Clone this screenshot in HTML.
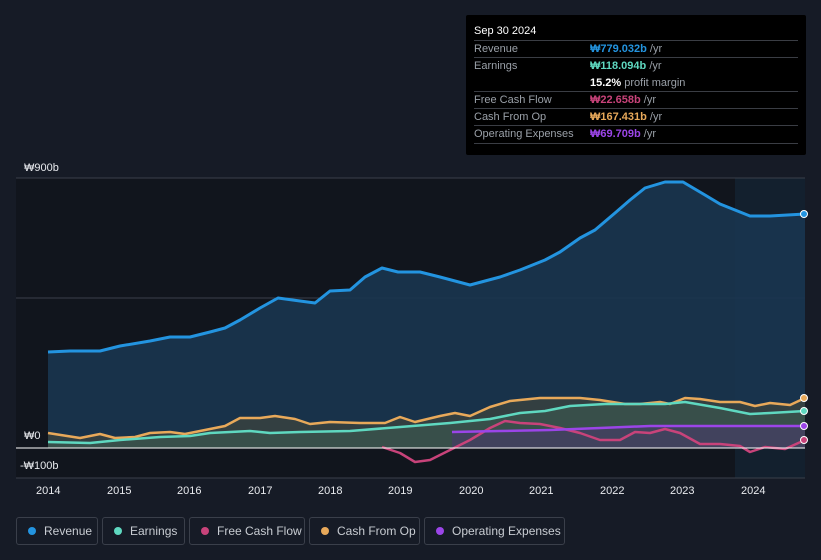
<!DOCTYPE html>
<html><head><meta charset="utf-8"><style>
body{margin:0;background:#161b26;font-family:"Liberation Sans","Noto Sans CJK KR",sans-serif;}
#w{position:relative;width:821px;height:560px;overflow:hidden;}
.tt{position:absolute;left:466px;top:15px;width:340px;height:140px;background:#000;border-radius:2px;}
.tt .d{position:absolute;left:8px;top:10px;color:#fff;font-size:11px;}
.row{position:absolute;left:8px;width:324px;border-top:1px solid #3a3d44;height:17px;font-size:11px;color:#9aa0a8;}
.row span{position:absolute;top:2px;}
.row b{font-weight:bold;}
.leg{position:absolute;top:517px;height:28px;border:1px solid #3a3f4a;border-radius:3px;color:#c8ccd2;font-size:12px;box-sizing:border-box;}
.leg i{position:absolute;left:11px;top:9px;width:8px;height:8px;border-radius:50%;}
.leg span{position:absolute;left:27px;top:6px;}
.ax{position:absolute;color:#e8eaee;font-size:11px;}
</style></head><body><div id="w">
<svg width="821" height="560" style="position:absolute;left:0;top:0">
<rect x="16" y="178" width="719" height="300" fill="#11151d"/>
<rect x="735" y="178" width="70" height="300" fill="#13202e"/>
<line x1="16" y1="178" x2="805" y2="178" stroke="#3a3f4a"/>
<line x1="16" y1="298" x2="805" y2="298" stroke="#3a3f4a"/>
<line x1="16" y1="478" x2="805" y2="478" stroke="#3a3f4a"/>
<path d="M48,352 L70,351 L100,351 L120,346 L150,341 L170,337 L190,337 L210,332 L225,328 L240,320 L260,308 L278,298 L300,301 L315,303 L330,291 L350,290 L365,277 L382,268 L398,272 L420,272 L440,277 L470,285 L500,277 L520,270 L545,260 L560,252 L580,238 L595,230 L615,213 L630,200 L645,188 L665,182 L683,182 L705,195 L720,204 L740,212 L750,216 L770,216 L805,214 L805,448 L48,448Z" fill="#1a3550" opacity="0.9"/>
<path d="M48,433 L80,438 L100,434 L115,438 L135,437 L150,433 L170,432 L185,434 L210,429 L225,426 L240,418 L260,418 L275,416 L295,419 L310,424 L330,422 L360,423 L385,423 L400,417 L415,422 L440,416 L455,413 L470,416 L490,407 L510,401 L540,398 L580,398 L600,400 L625,404 L640,404 L660,402 L670,404 L685,398 L700,399 L720,402 L740,402 L755,406 L770,403 L790,405 L805,398 L805,448 L48,448Z" fill="#4a4a3a" opacity="0.55"/>
<path d="M48,442 L90,443 L120,440 L160,437 L190,436 L210,433 L250,431 L270,433 L300,432 L350,431 L400,427 L450,423 L490,419 L520,413 L545,411 L570,406 L605,404 L665,404 L685,402 L720,408 L750,414 L770,413 L805,411 L805,448 L48,448Z" fill="#3c5a50" opacity="0.6"/>
<path d="M452,432 L500,431 L550,430 L600,428 L650,426 L700,426 L760,426 L805,426 L805,448 L452,448Z" fill="#4a3570" opacity="0.5"/>
<g fill="none" stroke-width="2.5" stroke-linejoin="round">
<path d="M48,352 L70,351 L100,351 L120,346 L150,341 L170,337 L190,337 L210,332 L225,328 L240,320 L260,308 L278,298 L300,301 L315,303 L330,291 L350,290 L365,277 L382,268 L398,272 L420,272 L440,277 L470,285 L500,277 L520,270 L545,260 L560,252 L580,238 L595,230 L615,213 L630,200 L645,188 L665,182 L683,182 L705,195 L720,204 L740,212 L750,216 L770,216 L805,214" stroke="#2394e0" stroke-width="3"/>
<path d="M48,433 L80,438 L100,434 L115,438 L135,437 L150,433 L170,432 L185,434 L210,429 L225,426 L240,418 L260,418 L275,416 L295,419 L310,424 L330,422 L360,423 L385,423 L400,417 L415,422 L440,416 L455,413 L470,416 L490,407 L510,401 L540,398 L580,398 L600,400 L625,404 L640,404 L660,402 L670,404 L685,398 L700,399 L720,402 L740,402 L755,406 L770,403 L790,405 L805,398" stroke="#e8a95a"/>
<path d="M48,442 L90,443 L120,440 L160,437 L190,436 L210,433 L250,431 L270,433 L300,432 L350,431 L400,427 L450,423 L490,419 L520,413 L545,411 L570,406 L605,404 L665,404 L685,402 L720,408 L750,414 L770,413 L805,411" stroke="#5fd8c0"/>
<path d="M382,447 L400,453 L415,462 L430,460 L450,450 L470,440 L490,428 L505,421 L520,423 L540,424 L560,428 L580,433 L600,440 L620,440 L635,432 L650,433 L665,429 L680,433 L700,444 L720,444 L740,446 L750,452 L765,447 L785,449 L805,440" stroke="#c8437a"/>
<path d="M452,432 L500,431 L550,430 L600,428 L650,426 L700,426 L760,426 L805,426" stroke="#9b45e8"/>
</g>
<line x1="16" y1="448" x2="805" y2="448" stroke="#fff" stroke-width="1"/>
<g stroke="#fff" stroke-width="1">
<circle cx="804" cy="214" r="3.5" fill="#2394e0"/><circle cx="804" cy="398" r="3.5" fill="#e8a95a"/><circle cx="804" cy="411" r="3.5" fill="#5fd8c0"/><circle cx="804" cy="426" r="3.5" fill="#9b45e8"/><circle cx="804" cy="440" r="3.5" fill="#c8437a"/></g>
</svg>
<div class="ax" style="left:24px;top:162px">₩900b</div>
<div class="ax" style="left:24px;top:430px">₩0</div>
<div class="ax" style="left:20px;top:460px">-₩100b</div>
<div class="ax" style="left:36px;top:485px">2014</div><div class="ax" style="left:107px;top:485px">2015</div><div class="ax" style="left:177px;top:485px">2016</div><div class="ax" style="left:248px;top:485px">2017</div><div class="ax" style="left:318px;top:485px">2018</div><div class="ax" style="left:388px;top:485px">2019</div><div class="ax" style="left:459px;top:485px">2020</div><div class="ax" style="left:529px;top:485px">2021</div><div class="ax" style="left:600px;top:485px">2022</div><div class="ax" style="left:670px;top:485px">2023</div><div class="ax" style="left:741px;top:485px">2024</div>
<div class="tt"><div class="d">Sep 30 2024</div>
<div class="row" style="top:25px"><span style="left:0">Revenue</span><span style="left:116px"><b style="color:#2394e0">₩779.032b</b> /yr</span></div>
<div class="row" style="top:42px"><span style="left:0">Earnings</span><span style="left:116px"><b style="color:#5fd8c0">₩118.094b</b> /yr</span></div>
<div style="position:absolute;left:124px;top:62px;font-size:11px;color:#9aa0a8"><b style="color:#fff">15.2%</b> profit margin</div>
<div class="row" style="top:76px"><span style="left:0">Free Cash Flow</span><span style="left:116px"><b style="color:#c8437a">₩22.658b</b> /yr</span></div>
<div class="row" style="top:93px"><span style="left:0">Cash From Op</span><span style="left:116px"><b style="color:#e8a95a">₩167.431b</b> /yr</span></div>
<div class="row" style="top:110px"><span style="left:0">Operating Expenses</span><span style="left:116px"><b style="color:#9b45e8">₩69.709b</b> /yr</span></div>
<div class="row" style="top:128px;height:0"></div>
</div>
<div class="leg" style="left:16px;width:82px"><i style="background:#2394e0"></i><span>Revenue</span></div>
<div class="leg" style="left:102px;width:83px"><i style="background:#5fd8c0"></i><span>Earnings</span></div>
<div class="leg" style="left:189px;width:116px"><i style="background:#c8437a"></i><span>Free Cash Flow</span></div>
<div class="leg" style="left:309px;width:111px"><i style="background:#e8a95a"></i><span>Cash From Op</span></div>
<div class="leg" style="left:424px;width:141px"><i style="background:#9b45e8"></i><span>Operating Expenses</span></div>
</div></body></html>
